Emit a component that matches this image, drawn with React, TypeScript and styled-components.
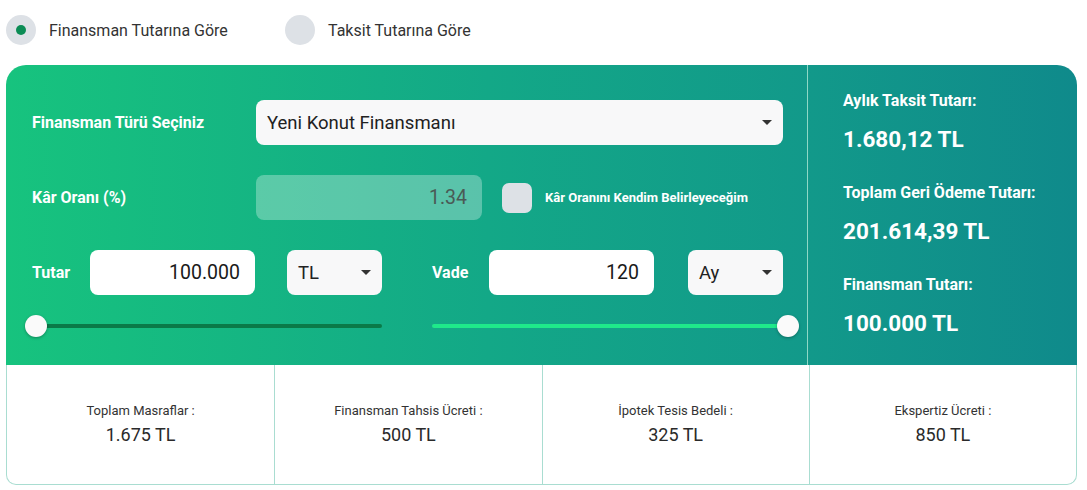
import React from "react";
import styled, { createGlobalStyle } from "styled-components";

const GlobalStyle = createGlobalStyle`
  html, body { margin: 0; padding: 0; background: #ffffff; }
  body { font-family: Roboto, "Noto Sans", "Liberation Sans", sans-serif; color: #333; }
  * { box-sizing: border-box; }
`;

const Page = styled.div`
  width: 1087px;
  padding: 0 10px 0 6px;
`;

const RadioRow = styled.div`
  display: flex;
  align-items: center;
  height: 60px;
`;

const RadioOption = styled.label<{ $w?: number }>`
  display: flex;
  align-items: center;
  width: ${(p) => (p.$w ? `${p.$w}px` : "auto")};
  font-size: 16px;
  color: #333;
  cursor: pointer;
`;

const RadioCircle = styled.span<{ $checked?: boolean }>`
  width: 30px;
  height: 30px;
  border-radius: 50%;
  background: #dde1e6;
  display: flex;
  align-items: center;
  justify-content: center;
  margin-right: 13px;
  flex-shrink: 0;
  &::after {
    content: "";
    width: 10px;
    height: 10px;
    border-radius: 50%;
    background: ${(p) => (p.$checked ? "#0b8c55" : "transparent")};
  }
`;

const Card = styled.div`
  margin-top: 5px;
  width: 1071px;
`;

const Panel = styled.div`
  display: grid;
  grid-template-columns: 801px 1px 1fr;
  height: 300px;
  border-radius: 20px 20px 0 0;
  background: linear-gradient(90deg, #17c37e 0%, #13a887 45%, #12998a 75%, #0f8a8b 100%);
  color: #fff;
`;

const Divider = styled.div`
  background: #8fd8c6;
`;

const Form = styled.div`
  padding: 35px 0 0 26px;
  display: flex;
  flex-direction: column;
`;

const Row = styled.div<{ $mt?: number }>`
  display: flex;
  align-items: center;
  height: 45px;
  margin-top: ${(p) => p.$mt ?? 0}px;
`;

const FieldLabel = styled.div<{ $w: number }>`
  width: ${(p) => p.$w}px;
  flex-shrink: 0;
  font-size: 16px;
  font-weight: 700;
  color: #fff;
`;

const SelectBox = styled.div<{ $w: number; $ml?: number }>`
  width: ${(p) => p.$w}px;
  height: 45px;
  margin-left: ${(p) => p.$ml ?? 0}px;
  background: #f8f8f9;
  border-radius: 8px;
  display: flex;
  align-items: center;
  justify-content: space-between;
  padding: 0 11px 0 11px;
  font-size: 18.5px;
  color: #222;
  flex-shrink: 0;
`;

const Caret = styled.span`
  width: 0;
  height: 0;
  border-left: 5px solid transparent;
  border-right: 5px solid transparent;
  border-top: 5px solid #333;
`;

const TextInput = styled.div<{ $w: number; $disabled?: boolean }>`
  width: ${(p) => p.$w}px;
  height: 45px;
  border-radius: 8px;
  background: ${(p) => (p.$disabled ? "rgba(255,255,255,0.3)" : "#ffffff")};
  display: flex;
  align-items: center;
  justify-content: flex-end;
  padding: 0 15px;
  font-size: 19.5px;
  color: ${(p) => (p.$disabled ? "#4a5a55" : "#1a1a1a")};
  flex-shrink: 0;
`;

const CheckBox = styled.span`
  width: 30px;
  height: 30px;
  border-radius: 7px;
  background: #dde1e6;
  margin-left: 20px;
  margin-right: 13px;
  flex-shrink: 0;
`;

const CheckLabel = styled.span`
  font-size: 13px;
  font-weight: 700;
  color: #fff;
`;

const Half = styled.div<{ $ml?: number }>`
  display: flex;
  align-items: center;
  margin-left: ${(p) => p.$ml ?? 0}px;
`;

const SliderRow = styled.div`
  display: flex;
  align-items: center;
  height: 22px;
  margin-top: 20px;
`;

const Track = styled.div<{ $w: number; $ml: number; $color: string }>`
  position: relative;
  width: ${(p) => p.$w}px;
  height: 4px;
  margin-left: ${(p) => p.$ml}px;
  border-radius: 2px;
  background: ${(p) => p.$color};
  flex-shrink: 0;
`;

const Thumb = styled.span<{ $end?: boolean }>`
  position: absolute;
  top: 50%;
  ${(p) => (p.$end ? "right: -11px;" : "left: -11px;")}
  width: 22px;
  height: 22px;
  margin-top: -11px;
  border-radius: 50%;
  background: #fafafa;
  box-shadow: 0 1px 3px rgba(0, 0, 0, 0.3);
`;

const Summary = styled.div`
  padding: 26px 0 0 35px;
  display: flex;
  flex-direction: column;
`;

const SumLabel = styled.div<{ $mt?: number }>`
  font-size: 16px;
  line-height: 20px;
  font-weight: 700;
  margin-top: ${(p) => p.$mt ?? 0}px;
`;

const SumValue = styled.div`
  font-size: 22.5px;
  line-height: 30px;
  font-weight: 700;
  margin-top: 13px;
`;

const Costs = styled.div`
  display: grid;
  grid-template-columns: repeat(4, 1fr);
  height: 120px;
  border: 1px solid #a9ddd1;
  border-top: none;
  border-radius: 0 0 10px 10px;
`;

const CostCell = styled.div`
  display: flex;
  flex-direction: column;
  align-items: center;
  justify-content: center;
  gap: 3px;
  & + & {
    border-left: 1px solid #a9ddd1;
  }
`;

const CostLabel = styled.div`
  font-size: 13px;
  line-height: 18px;
  color: #333;
`;

const CostValue = styled.div`
  font-size: 18px;
  line-height: 24px;
  color: #2a2a2a;
`;

const costs = [
  { label: "Toplam Masraflar :", value: "1.675 TL" },
  { label: "Finansman Tahsis Ücreti :", value: "500 TL" },
  { label: "İpotek Tesis Bedeli :", value: "325 TL" },
  { label: "Ekspertiz Ücreti :", value: "850 TL" },
];

export default function App() {
  return (
    <Page>
      <GlobalStyle />
      <RadioRow>
        <RadioOption $w={279}>
          <RadioCircle $checked />
          Finansman Tutarına Göre
        </RadioOption>
        <RadioOption>
          <RadioCircle />
          Taksit Tutarına Göre
        </RadioOption>
      </RadioRow>
      <Card>
        <Panel>
          <Form>
            <Row>
              <FieldLabel $w={224}>Finansman Türü Seçiniz</FieldLabel>
              <SelectBox $w={527}>
                Yeni Konut Finansmanı
                <Caret />
              </SelectBox>
            </Row>
            <Row $mt={30}>
              <FieldLabel $w={224}>Kâr Oranı (%)</FieldLabel>
              <TextInput $w={226} $disabled>
                1.34
              </TextInput>
              <CheckBox />
              <CheckLabel>Kâr Oranını Kendim Belirleyeceğim</CheckLabel>
            </Row>
            <Row $mt={30}>
              <Half>
                <FieldLabel $w={58}>Tutar</FieldLabel>
                <TextInput $w={165}>100.000</TextInput>
                <SelectBox $w={95} $ml={32}>
                  TL
                  <Caret />
                </SelectBox>
              </Half>
              <Half $ml={50}>
                <FieldLabel $w={57}>Vade</FieldLabel>
                <TextInput $w={165}>120</TextInput>
                <SelectBox $w={95} $ml={34}>
                  Ay
                  <Caret />
                </SelectBox>
              </Half>
            </Row>
            <SliderRow>
              <Track $w={346} $ml={4} $color="#0a7a48">
                <Thumb />
              </Track>
              <Track $w={356} $ml={50} $color="#1fe98a">
                <Thumb $end />
              </Track>
            </SliderRow>
          </Form>
          <Divider />
          <Summary>
            <SumLabel>Aylık Taksit Tutarı:</SumLabel>
            <SumValue>1.680,12 TL</SumValue>
            <SumLabel $mt={29}>Toplam Geri Ödeme Tutarı:</SumLabel>
            <SumValue>201.614,39 TL</SumValue>
            <SumLabel $mt={29}>Finansman Tutarı:</SumLabel>
            <SumValue>100.000 TL</SumValue>
          </Summary>
        </Panel>
        <Costs>
          {costs.map((c) => (
            <CostCell key={c.label}>
              <CostLabel>{c.label}</CostLabel>
              <CostValue>{c.value}</CostValue>
            </CostCell>
          ))}
        </Costs>
      </Card>
    </Page>
  );
}
